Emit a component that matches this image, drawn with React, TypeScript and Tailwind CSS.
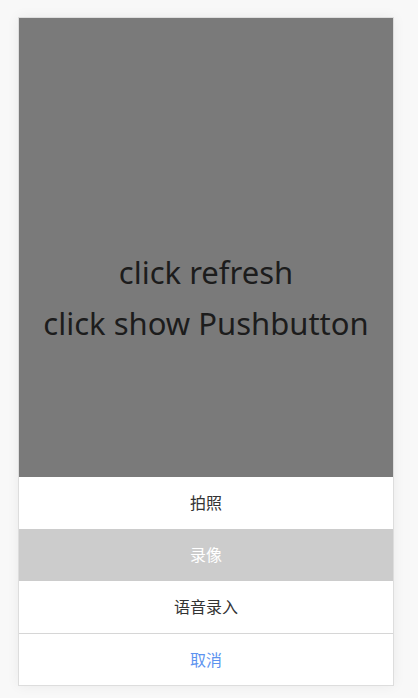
export default function App() {
  const options = ['拍照', '录像', '语音录入'];
  const active = 1;

  return (
    <div className="min-h-[698px] bg-[#f8f8f8] pt-[17px] pl-[18px] font-['Noto_Sans','Noto_Sans_CJK_SC',sans-serif]">
      <div className="w-[376px] h-[669px] flex flex-col bg-white border border-[#dddddd] shadow-[0_0_12px_rgba(0,0,0,0.06)]">
        <div className="flex-1 bg-[#7a7a7a] flex flex-col items-center justify-center pt-[100px] text-[#1c1c1c] text-[31px] leading-[51px]">
          <div>click refresh</div>
          <div>click show Pushbutton</div>
        </div>
        {options.map((label, i) => (
          <div
            key={label}
            className={`h-[52px] flex items-center justify-center text-[16px] ${
              i === active ? 'bg-[#cccccc] text-white' : 'bg-white text-[#333333]'
            }`}
          >
            {label}
          </div>
        ))}
        <div className="h-[52px] flex items-center justify-center text-[16px] text-[#5d93f0] border-t border-[#d6d6d6]">
          取消
        </div>
      </div>
    </div>
  );
}
